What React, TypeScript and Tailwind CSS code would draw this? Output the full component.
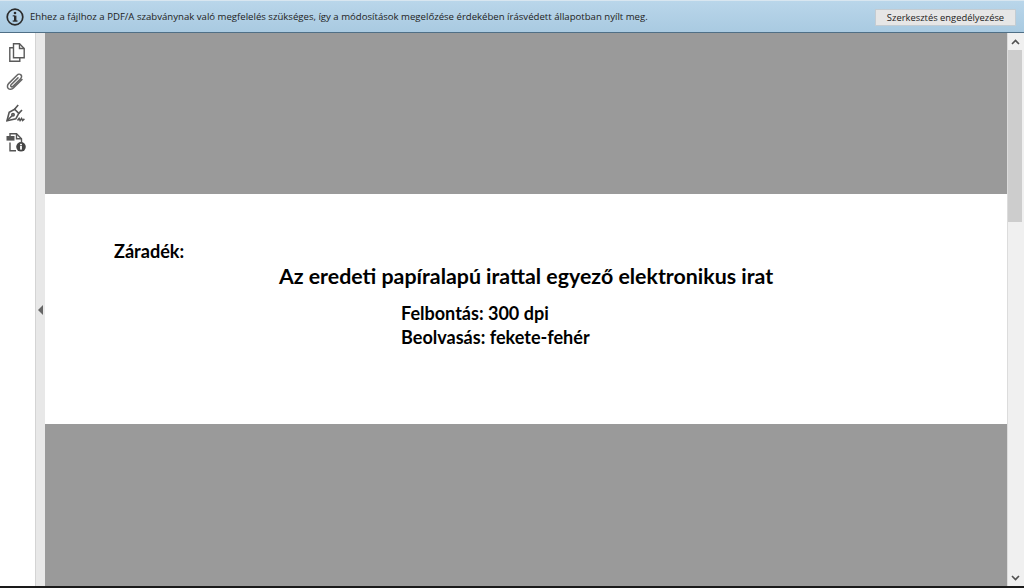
const ChevronUp = () => (
  <svg width="9" height="6" viewBox="0 0 9 6" fill="none" stroke="#505050" strokeWidth="1.6">
    <path d="M1 5l3.5-3.5L8 5" />
  </svg>
)

const ChevronDown = () => (
  <svg width="9" height="6" viewBox="0 0 9 6" fill="none" stroke="#505050" strokeWidth="1.6">
    <path d="M1 1l3.5 3.5L8 1" />
  </svg>
)

const InfoIcon = () => (
  <svg width="18" height="18" viewBox="0 0 18 18" fill="none">
    <circle cx="9" cy="9" r="7.8" stroke="#2c2c2c" strokeWidth="1.7" />
    <rect x="8" y="7.6" width="2.4" height="5.4" fill="#2c2c2c" />
    <rect x="6.7" y="12.4" width="4.8" height="1.3" fill="#2c2c2c" />
    <rect x="6.7" y="7.3" width="2" height="1.1" fill="#2c2c2c" />
    <circle cx="9" cy="5" r="1.3" fill="#2c2c2c" />
  </svg>
)

const PagesIcon = () => (
  <svg width="16" height="19" viewBox="0 0 16 19" fill="none" stroke="#5a5a5a" strokeWidth="1.4">
    <path d="M4.5 .8h6l4.7 4.7v9.2H4.5z" />
    <path d="M10.5 .8v4.7h4.7" />
    <path d="M4.5 4.8H.8v13.4h10v-3.5" />
  </svg>
)

const ClipIcon = () => (
  <svg width="18" height="18" viewBox="0 0 18 18" fill="none" stroke="#666" strokeWidth="1.5" strokeLinecap="round">
    <path d="M16 6.5L7.4 15c-1.6 1.6-3.8 1.8-5.1.5-1.3-1.3-1.1-3.5.5-5.1L11 2.2c1.2-1.2 2.9-1.3 3.9-.3s.9 2.7-.3 3.9L7 13.2c-.7.7-1.5.8-2 .3s-.4-1.3.3-2L12 4.9" />
  </svg>
)

const SignIcon = () => (
  <svg width="20" height="18" viewBox="0 0 20 18" fill="none" stroke="#555" strokeWidth="1.6">
    <path d="M1 16.8l2.2-8.6 5.4-3 4.2 4.2-3 5.4z" />
    <path d="M1 16.8l5-5" />
    <circle cx="7" cy="10.8" r="1.2" />
    <path d="M8.6 5.2L12.2 1M12.8 9.4L16 6" />
    <path d="M11.5 16.5l1.6-2 1 2 1.5-2 1 2 1.8-1.6" strokeWidth="1.5" />
  </svg>
)

const DocInfoIcon = () => (
  <svg width="20" height="19" viewBox="0 0 20 19" fill="none" stroke="#555" strokeWidth="1.4">
    <path d="M4 3V.8h6.5l5 5v3.4" />
    <path d="M10.5 .8v5h5" />
    <rect x=".5" y="3" width="8" height="4.6" fill="#555" stroke="none" />
    <path d="M4 9.5v8.3h6" />
    <circle cx="15" cy="13.8" r="4.8" fill="#444" stroke="none" />
    <rect x="14.1" y="13" width="1.8" height="3.6" fill="#fff" stroke="none" />
    <rect x="14.1" y="10.8" width="1.8" height="1.5" fill="#fff" stroke="none" />
  </svg>
)

const App = () => {
  return (
    <div className="flex h-[588px] w-[1024px] flex-col overflow-hidden bg-white font-['Open_Sans',sans-serif]">
      {/* read only notice */}
      <div className="flex h-[33px] shrink-0 items-center border-t border-b border-t-[#d8e6f0] border-b-[#4f6f86] bg-gradient-to-b from-[#b9d6ea] to-[#a9cae1] pt-[1px] pr-[8px] pl-[6px]">
        <InfoIcon />
        <span className="ml-[6px] text-[9.6px] text-[#222]">
          Ehhez a fájlhoz a PDF/A szabványnak való megfelelés szükséges, így a módosítások megelőzése érdekében írásvédett állapotban nyílt meg.
        </span>
        <button className="ml-auto h-[17px] w-[141px] border border-[#c4ccd2] bg-[#e6e6e6] text-[9.4px] leading-[15px] text-[#222]">
          Szerkesztés engedélyezése
        </button>
      </div>

      <div className="flex min-h-0 flex-1">
        {/* left tool rail */}
        <div className="flex w-[36px] shrink-0 flex-col items-start border-r border-[#d4d4d4] bg-white pt-[10px] pl-[6px]">
          <div className="ml-[3px]">
            <PagesIcon />
          </div>
          <div className="mt-[11px]">
            <ClipIcon />
          </div>
          <div className="mt-[13px]">
            <SignIcon />
          </div>
          <div className="mt-[11px]">
            <DocInfoIcon />
          </div>
        </div>

        {/* splitter */}
        <div className="flex w-[9px] shrink-0 items-center justify-center bg-[#e8e8e8]">
          <div className="h-0 w-0 border-y-[5px] border-r-[5px] border-y-transparent border-r-[#666]" />
        </div>

        {/* document */}
        <div className="flex min-w-0 flex-1 flex-col bg-[#9a9a9a]">
          <div className="h-[161px] shrink-0" />
          <div className="h-[230px] shrink-0 bg-white pt-[44px] font-['Lato',sans-serif] font-bold text-black">
            <p className="pl-[69px] text-[18.1px] leading-[26px]">Záradék:</p>
            <p className="-mt-[2px] text-center text-[21.35px] leading-[28px]">Az eredeti papíralapú irattal egyező elektronikus irat</p>
            <div className="pt-[11px] pl-[356px] text-[18.05px] leading-[24px]">
              <p>Felbontás: 300 dpi</p>
              <p>Beolvasás: fekete-fehér</p>
            </div>
          </div>
        </div>

        {/* scrollbar */}
        <div className="flex w-[17px] shrink-0 flex-col items-start border-l border-[#dcdcdc] bg-[#f0f0f0]">
          <div className="flex h-[17px] w-[14px] items-center justify-center">
            <ChevronUp />
          </div>
          <div className="h-[172px] w-[14px] bg-[#cdcdcd]" />
          <div className="flex-1" />
          <div className="flex h-[17px] w-[14px] items-center justify-center">
            <ChevronDown />
          </div>
        </div>
      </div>

      <div className="h-[2px] shrink-0 bg-[#1a1a1a]" />
    </div>
  )
}

export default App
